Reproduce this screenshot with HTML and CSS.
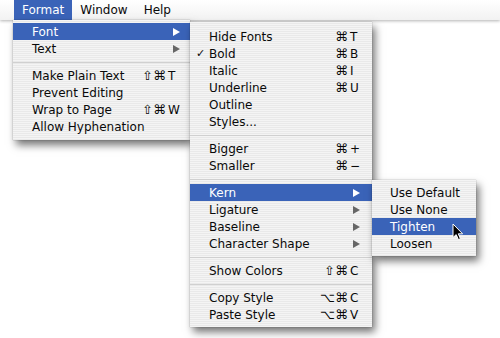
FILE: index.html
```html
<!DOCTYPE html>
<html>
<head>
<meta charset="utf-8">
<link rel="stylesheet" href="styles.css">
</head>
<body>
<div class="menubar">
  <span class="mb-item active">Format</span>
  <span class="mb-item">Window</span>
  <span class="mb-item">Help</span>
</div>

<div class="menu menu-format">
  <div class="row hl"><span class="label">Font</span><span class="arrow"></span></div>
  <div class="row"><span class="label">Text</span><span class="arrow"></span></div>
  <div class="sep"></div>
  <div class="row"><span class="label">Make Plain Text</span><span class="mods">⇧⌘</span><span class="key">T</span></div>
  <div class="row"><span class="label">Prevent Editing</span></div>
  <div class="row"><span class="label">Wrap to Page</span><span class="mods">⇧⌘</span><span class="key">W</span></div>
  <div class="row"><span class="label">Allow Hyphenation</span></div>
</div>

<div class="menu menu-font">
  <div class="row"><span class="label">Hide Fonts</span><span class="mods">⌘</span><span class="key">T</span></div>
  <div class="row"><span class="check">✓</span><span class="label">Bold</span><span class="mods">⌘</span><span class="key">B</span></div>
  <div class="row"><span class="label">Italic</span><span class="mods">⌘</span><span class="key">I</span></div>
  <div class="row"><span class="label">Underline</span><span class="mods">⌘</span><span class="key">U</span></div>
  <div class="row"><span class="label">Outline</span></div>
  <div class="row"><span class="label">Styles...</span></div>
  <div class="sep"></div>
  <div class="row"><span class="label">Bigger</span><span class="mods">⌘</span><span class="key">+</span></div>
  <div class="row"><span class="label">Smaller</span><span class="mods">⌘</span><span class="key">−</span></div>
  <div class="sep"></div>
  <div class="row hl"><span class="label">Kern</span><span class="arrow"></span></div>
  <div class="row"><span class="label">Ligature</span><span class="arrow"></span></div>
  <div class="row"><span class="label">Baseline</span><span class="arrow"></span></div>
  <div class="row"><span class="label">Character Shape</span><span class="arrow"></span></div>
  <div class="sep"></div>
  <div class="row"><span class="label">Show Colors</span><span class="mods">⇧⌘</span><span class="key">C</span></div>
  <div class="sep"></div>
  <div class="row"><span class="label">Copy Style</span><span class="mods">⌥⌘</span><span class="key">C</span></div>
  <div class="row"><span class="label">Paste Style</span><span class="mods">⌥⌘</span><span class="key">V</span></div>
</div>

<div class="menu menu-kern">
  <div class="row"><span class="label">Use Default</span></div>
  <div class="row"><span class="label">Use None</span></div>
  <div class="row hl"><span class="label">Tighten</span></div>
  <div class="row"><span class="label">Loosen</span></div>
</div>

<svg class="cursor" width="12" height="18" viewBox="0 0 12 18">
  <path d="M1 1 L1 14.5 L4.2 11.6 L6.4 16.6 L8.4 15.7 L6.3 10.8 L10.6 10.8 Z" fill="#000" stroke="#fff" stroke-width="1" stroke-linejoin="round"/>
</svg>
</body>
</html>
```

FILE: styles.css
```css
html, body {
  margin: 0;
  padding: 0;
}
body {
  width: 500px;
  height: 338px;
  background: #ffffff;
  position: relative;
  overflow: hidden;
  font-family: "DejaVu Sans", "Liberation Sans", sans-serif;
  font-size: 12px;
  color: #0a0a0a;
}

.menubar {
  height: 20px;
  display: flex;
  align-items: stretch;
  padding-left: 14px;
  background: linear-gradient(#ffffff, #f2f2f2);
  box-shadow: 0 1px 3px rgba(0, 0, 0, 0.3);
}
.mb-item {
  display: flex;
  align-items: center;
  padding: 0 8px;
  line-height: 20px;
}
.mb-item.active {
  background: #3a63b8;
  color: #fff;
}

.menu {
  position: absolute;
  box-sizing: border-box;
  background: repeating-linear-gradient(#f4f4f4 0 1px, #e9e9e9 1px 2px);
  box-shadow: 3px 5px 8px rgba(0, 0, 0, 0.55), 0 0 1px rgba(0, 0, 0, 0.4);
}
.menu-format {
  left: 13px;
  top: 20px;
  width: 177px;
  padding: 3px 0 5px;
  --key: 12px;
  --pr: 10px;
}
.menu-font {
  left: 190px;
  top: 22px;
  width: 182px;
  padding: 6px 0 4px;
  --key: 10px;
  --pr: 12px;
  z-index: 2;
}
.menu-kern {
  left: 372px;
  top: 180px;
  width: 104px;
  padding: 4px 0 4px;
  --key: 10px;
  --pr: 12px;
  z-index: 3;
}
.menu-kern .row {
  padding-left: 18px;
}

.row {
  position: relative;
  display: flex;
  align-items: center;
  height: 17px;
  padding: 0 var(--pr) 0 19px;
  white-space: nowrap;
}
.row.hl {
  background: #3a63b8;
  color: #fff;
}
.label {
  flex: 1;
}
.mods {
  text-align: right;
  margin-right: 2px;
  font-size: 13px;
}
.key {
  width: var(--key);
}
.check {
  position: absolute;
  left: 6px;
  font-size: 11px;
}
.arrow {
  width: 0;
  height: 0;
  border-left: 7px solid #666666;
  border-top: 4px solid transparent;
  border-bottom: 4px solid transparent;
}
.row.hl .arrow {
  border-left-color: #ffffff;
}
.sep {
  height: 10px;
  display: flex;
  align-items: center;
}
.sep::before {
  content: "";
  flex: 1;
  height: 1px;
  background: #d0d0d0;
}

.cursor {
  position: absolute;
  left: 452px;
  top: 223px;
  z-index: 5;
}
```
